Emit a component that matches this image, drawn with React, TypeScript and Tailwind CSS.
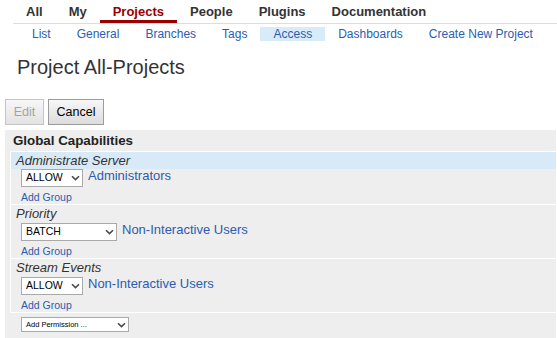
import React from 'react';

const Chevron = () => (
  <svg width="9" height="6" viewBox="0 0 9 6" className="shrink-0">
    <path d="M1 1.2 L4.5 4.6 L8 1.2" fill="none" stroke="#4a4a4a" strokeWidth="1.6" />
  </svg>
);

const FakeSelect = ({ label, className }: { label: string; className: string }) => (
  <div
    className={`flex items-center justify-between border border-[#a9a9a9] bg-white pl-[4px] pr-[2px] text-black ${className}`}
  >
    <span>{label}</span>
    <Chevron />
  </div>
);

const topNav = ['All', 'My', 'Projects', 'People', 'Plugins', 'Documentation'];
const subNav = ['List', 'General', 'Branches', 'Tags', 'Access', 'Dashboards', 'Create New Project'];

const sections = [
  { name: 'Administrate Server', value: 'ALLOW', group: 'Administrators', wide: false, selected: true },
  { name: 'Priority', value: 'BATCH', group: 'Non-Interactive Users', wide: true, selected: false },
  { name: 'Stream Events', value: 'ALLOW', group: 'Non-Interactive Users', wide: false, selected: false },
];

const App = () => {
  return (
    <div className="w-[557px] h-[338px] overflow-hidden bg-white font-['Liberation_Sans',Arial,sans-serif] text-[#333]">
      {/* top menu */}
      <div className="ml-[13px] flex border-b border-[#dddddd]">
        {topNav.map((item) => (
          <span
            key={item}
            className={
              item === 'Projects'
                ? 'px-[13px] pt-[4px] pb-[1px] text-[13px] leading-[15px] font-bold text-[#990000] border-b-[3px] border-[#990000]'
                : 'px-[13px] pt-[4px] pb-[1px] text-[13px] leading-[15px] font-bold text-[#333333] border-b-[3px] border-transparent'
            }
          >
            {item}
          </span>
        ))}
      </div>

      {/* sub menu */}
      <div className="ml-[19px] mt-[3px] flex text-[12px] leading-[14px] text-[#2a5db0]">
        {subNav.map((item) => (
          <span key={item} className={item === 'Access' ? 'px-[13px] bg-[#d8ebf8]' : 'px-[13px]'}>
            {item}
          </span>
        ))}
      </div>

      <h1 className="ml-[17px] mt-[14px] text-[20px] leading-[24px] text-[#333333]">Project All-Projects</h1>

      <div className="ml-[5px] mt-[20px] flex gap-[4px] text-[12.5px]">
        <button className="w-[39px] h-[26px] border border-[#c4c4c4] bg-gradient-to-b from-[#f7f7f7] to-[#e2e2e2] text-[#a3a3a3]">
          Edit
        </button>
        <button className="w-[56px] h-[26px] border border-[#9c9c9c] bg-gradient-to-b from-[#f7f7f7] to-[#dcdcdc] text-black">
          Cancel
        </button>
      </div>

      <div className="ml-[5px] mt-[5px] w-[551px] h-[210px] bg-[#eeeeee]">
        <div className="pl-[8px] pt-[1px] text-[13.33px] leading-[20px] font-bold text-[#222222]">Global Capabilities</div>

        <div className="ml-[5px] border-l border-t border-white">
          {sections.map((s, i) => (
            <div key={s.name} className="border-b border-white">
              <div
                className={
                  s.selected
                    ? 'pl-[5px] bg-[#d8eaf8] text-[13px] leading-[17px] italic text-[#333333]'
                    : 'pl-[5px] text-[13px] leading-[18px] italic text-[#333333]'
                }
              >
                {s.name}
              </div>
              <div className="pl-[10px] flex items-start gap-[5px]">
                <FakeSelect
                  label={s.value}
                  className={s.wide ? 'w-[96px] h-[18px] text-[10.5px]' : 'w-[62px] h-[18px] text-[10.5px]'}
                />
                <a className="text-[13px] leading-[13px] text-[#2a5db0]">{s.group}</a>
              </div>
              <div className={i === 0 ? 'pl-[10px] mt-[4px]' : 'pl-[10px] mt-[4px]'}>
                <a className="text-[10.5px] leading-[13px] block text-[#2a5db0]">Add Group</a>
              </div>
            </div>
          ))}
        </div>

        <div className="pl-[16px] mt-[4px]">
          <FakeSelect label="Add Permission ..." className="w-[108px] h-[15px] text-[7.5px]" />
        </div>
      </div>
    </div>
  );
};

export default App;
